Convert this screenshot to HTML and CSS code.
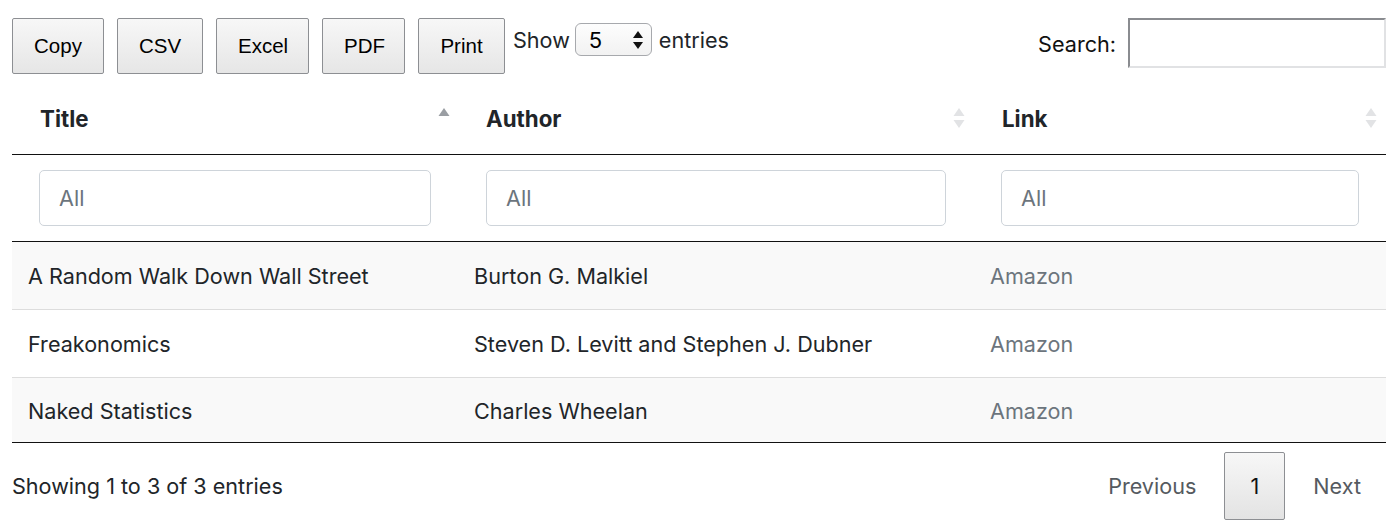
FILE: index.html
```html
<!DOCTYPE html>
<html>
<head>
<meta charset="utf-8">
<link rel="stylesheet" href="styles.css">
</head>
<body>
<div class="wrapper">
  <div class="topbar">
    <div class="left">
      <div class="buttons">
        <button class="dt-btn">Copy</button>
        <button class="dt-btn">CSV</button>
        <button class="dt-btn">Excel</button>
        <button class="dt-btn">PDF</button>
        <button class="dt-btn">Print</button>
      </div>
      <div class="length">
        <span>Show</span>
        <span class="select-wrap">
          <span class="select-val">5</span>
          <svg class="select-arrows" width="12" height="22" viewBox="0 0 12 22"><path d="M6 2 L11 9 L1 9 Z" fill="#111"/><path d="M6 20 L11 13 L1 13 Z" fill="#111"/></svg>
        </span>
        <span>entries</span>
      </div>
    </div>
    <div class="search">
      <label>Search:</label>
      <input class="search-input" type="text">
    </div>
  </div>

  <table class="data">
    <colgroup>
      <col class="c1"><col class="c2"><col class="c3">
    </colgroup>
    <thead>
      <tr class="head-row">
        <th><div class="th-in"><span>Title</span><svg class="sort" width="12" height="20" viewBox="0 0 12 20"><path d="M6 0 L11.5 8 L0.5 8 Z" fill="#9a9ea3"/></svg></div></th>
        <th><div class="th-in"><span>Author</span><svg class="sort" width="12" height="20" viewBox="0 0 12 20"><path d="M6 0 L11.5 8 L0.5 8 Z" fill="#e2e3e5"/><path d="M6 20 L11.5 12 L0.5 12 Z" fill="#e2e3e5"/></svg></div></th>
        <th><div class="th-in"><span>Link</span><svg class="sort" width="12" height="20" viewBox="0 0 12 20"><path d="M6 0 L11.5 8 L0.5 8 Z" fill="#e2e3e5"/><path d="M6 20 L11.5 12 L0.5 12 Z" fill="#e2e3e5"/></svg></div></th>
      </tr>
      <tr class="filter-row">
        <th><input class="filter" type="text" placeholder="All"></th>
        <th><input class="filter" type="text" placeholder="All"></th>
        <th><input class="filter" type="text" placeholder="All"></th>
      </tr>
    </thead>
    <tbody>
      <tr class="odd">
        <td>A Random Walk Down Wall Street</td>
        <td>Burton G. Malkiel</td>
        <td><a class="link">Amazon</a></td>
      </tr>
      <tr class="even">
        <td>Freakonomics</td>
        <td>Steven D. Levitt and Stephen J. Dubner</td>
        <td><a class="link">Amazon</a></td>
      </tr>
      <tr class="odd">
        <td>Naked Statistics</td>
        <td>Charles Wheelan</td>
        <td><a class="link">Amazon</a></td>
      </tr>
    </tbody>
  </table>

  <div class="footer">
    <div class="info">Showing 1 to 3 of 3 entries</div>
    <div class="paging">
      <span class="pg">Previous</span>
      <span class="pg current">1</span>
      <span class="pg">Next</span>
    </div>
  </div>
</div>
</body>
</html>
```

FILE: styles.css
```css
* { box-sizing: border-box; }
html, body { margin: 0; padding: 0; background: #fff; }
body {
  font-family: Inter, "Noto Sans", sans-serif;
  font-size: 21.6px;
  color: #212529;
}
.wrapper {
  width: 1374px;
  margin-left: 12px;
  padding-top: 18px;
}
.topbar {
  display: flex;
  justify-content: space-between;
  align-items: flex-start;
  height: 55px;
}
.left { display: flex; align-items: flex-start; }
.buttons { display: flex; gap: 13px; }
.dt-btn {
  height: 56px;
  padding: 0 21px;
  font-family: "Liberation Sans", Arial, sans-serif;
  font-size: 20.5px;
  color: #000;
  border: 1px solid #8d8f93;
  border-radius: 2px;
  background: linear-gradient(to bottom, #f7f7f7 0%, #e6e6e6 100%);
  padding-top: 0;
}
.dt-btn:nth-child(1) { width: 92px; }
.dt-btn:nth-child(2) { width: 86px; }
.dt-btn:nth-child(3) { width: 93px; }
.dt-btn:nth-child(4) { width: 83px; }
.dt-btn:nth-child(5) { width: 87px; }
.length {
  display: flex;
  align-items: center;
  gap: 5px;
  margin-left: 8px;
  margin-top: 5px;
  height: 33px;
}
.length > span:last-child { margin-left: 2px; }
.select-wrap {
  position: relative;
  display: inline-flex;
  align-items: center;
  width: 77px;
  height: 33px;
  border: 1px solid #a7a9ad;
  border-radius: 6px;
  background: linear-gradient(to bottom, #fdfdfd, #f2f2f2);
  padding-left: 13px;
  font-size: 22px;
  color: #000;
}
.select-arrows { position: absolute; right: 7px; top: 5px; }
.search {
  display: flex;
  align-items: center;
  gap: 12px;
}
.search label { color: #111; margin-top: 1px; }
.search-input {
  width: 258px;
  height: 50px;
  border: 2px solid;
  border-color: #8a8c90 #e1e2e4 #e1e2e4 #8a8c90;
  background: #fff;
  margin: 0;
}
table.data {
  width: 100%;
  border-collapse: collapse;
  margin-top: 10px;
  table-layout: fixed;
  border-bottom: 1px solid #111;
}
col.c1 { width: 446px; }
col.c2 { width: 516px; }
col.c3 { width: 412px; }
.head-row th {
  padding: 0 8px 0 28px;
  height: 71px;
  border-bottom: 1px solid #111;
  font-weight: 700;
  font-size: 22.3px;
  text-align: left;
  color: #212529;
}
.head-row th:nth-child(n+2) { padding-right: 9px; }
.th-in {
  display: flex;
  justify-content: space-between;
  align-items: center;
}
.sort { display: block; }
.filter-row th {
  padding: 15px 27px 15px 27px;
  border-bottom: 1px solid #111;
  font-weight: 400;
}
.filter-row th:nth-child(2) { padding: 15px 28px; }
.filter {
  display: block;
  width: 100%;
  height: 56px;
  border: 1px solid #ced4da;
  border-radius: 5px;
  padding: 0 19px;
  font-family: Inter, "Noto Sans", sans-serif;
  font-size: 21.6px;
  color: #495057;
  background: #fff;
}
.filter::placeholder { color: #6c757d; opacity: 1; }
tbody td {
  height: 68px;
  padding: 2px 16px 0;
  border-top: 1px solid #dddddd;
  vertical-align: middle;
  white-space: nowrap;
}
tbody tr:first-child td { border-top: none; height: 68px; }
tbody tr:last-child td { height: 65px; }
tbody tr.odd { background: #f9f9f9; }
tbody tr.even { background: #fff; }
.link { color: #6c757d; text-decoration: none; }
.footer {
  display: flex;
  justify-content: space-between;
  align-items: center;
  margin-top: 9px;
}
.info { color: #212529; }
.paging { display: flex; align-items: center; gap: 0; }
.pg {
  color: #555a60;
  padding: 0 28px;
}
.pg:last-child { padding-right: 25px; }
.pg.current {
  display: inline-flex;
  align-items: center;
  justify-content: center;
  width: 61px;
  height: 68px;
  padding: 0;
  color: #111;
  border: 1px solid #8d8f93;
  border-radius: 2px;
  background: linear-gradient(to bottom, #f7f7f7 0%, #e3e3e3 100%);
}
```
